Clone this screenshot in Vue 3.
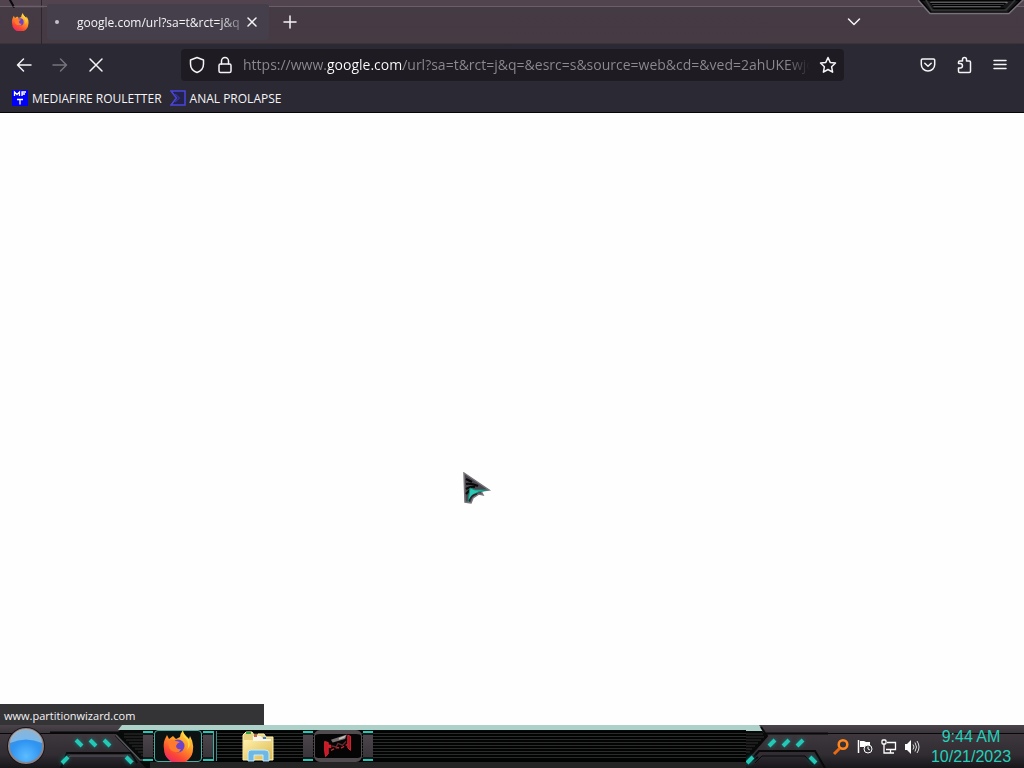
<script setup>
import { ref } from 'vue'

const address = ref('https://www.google.com/url?sa=t&rct=j&q=&esrc=s&source=web&cd=&ved=2ahUKEwjo2878')
</script>

<template>
  <div class="desktop">
    <header class="tabstrip">
      <svg class="scratch" width="44" height="9" viewBox="0 0 44 9" aria-hidden="true">
        <path d="M10 0l4 7" stroke="#08070a" stroke-width="2" />
        <path d="M14 6.500h30" stroke="#6b5f6b" />
      </svg>
      <button class="pinned" aria-label="Firefox View">
        <svg width="18" height="18" viewBox="0 0 32 32"><use href="#fox" /></svg>
      </button>
      <div class="tab">
        <span class="loading"></span>
        <span class="tab-title">google.com/url?sa=t&amp;rct=j&amp;q</span>
        <button class="tab-close" aria-label="Close tab">
          <svg width="12" height="12" viewBox="0 0 12 12"><path d="M2 2l8 8M10 2l-8 8" /></svg>
        </button>
      </div>
      <button class="new-tab" aria-label="New tab">
        <svg width="14" height="14" viewBox="0 0 14 14"><path d="M7 1v12M1 7h12" /></svg>
      </button>
      <button class="all-tabs" aria-label="List all tabs">
        <svg width="14" height="10" viewBox="0 0 14 10"><path d="M1.500 2L7 7.500 12.500 2" /></svg>
      </button>
      <svg class="notch" width="106" height="15" viewBox="0 0 106 15" aria-hidden="true">
        <path d="M2 0l11 13h77L103 0z" fill="#19191b" stroke="#050506" stroke-width="2" />
        <path d="M0 0l12 13.500h79L105 0" fill="none" stroke="#77737a" />
        <path d="M8 0l6 10h74l9-10" fill="none" stroke="#38383b" />
        <path d="M13 2.500h76M15 4.500h70M16 6.500h66" stroke="#77777a" />
        <path d="M13 3.500h74M15 5.500h70M16 8.500h70" stroke="#000" />
      </svg>
    </header>

    <nav class="toolbar">
      <div class="nav-buttons">
        <button aria-label="Back">
          <svg width="16" height="16" viewBox="0 0 16 16"><path d="M15 8H1.500M7.500 2l-6 6 6 6" /></svg>
        </button>
        <button class="dim" aria-label="Forward" disabled>
          <svg width="16" height="16" viewBox="0 0 16 16"><path d="M1 8h13.500M8.500 2l6 6-6 6" /></svg>
        </button>
        <button aria-label="Stop">
          <svg width="16" height="16" viewBox="0 0 16 16"><path d="M2 2l12 12M14 2L2 14" /></svg>
        </button>
      </div>
      <div class="urlbar">
        <button aria-label="Tracking protection">
          <svg width="16" height="18" viewBox="0 0 16 18"><path d="M8 1.500l6.500 2.500v4c0 4-2.500 7-6.500 8.500C4 15 1.500 12 1.500 8V4z" /></svg>
        </button>
        <button aria-label="Site information">
          <svg width="16" height="18" viewBox="0 0 16 18"><rect x="2" y="8" width="12" height="8.500" rx="1.500" /><path d="M4.500 8V5a3.500 3.500 0 0 1 7 0v3" /></svg>
        </button>
        <input v-model="address" class="address" type="text" aria-label="Address" spellcheck="false" />
        <button aria-label="Bookmark this page">
          <svg width="18" height="18" viewBox="0 0 18 18"><path d="M9 1.500l2.200 4.900 5.300.6-3.900 3.700 1 5.500L9 13.500l-4.600 2.700 1-5.500L1.500 7l5.300-.6z" /></svg>
        </button>
      </div>
      <div class="tools">
        <button aria-label="Save to Pocket">
          <svg width="16" height="16" viewBox="0 0 16 16"><path d="M2.500 2h11a1.200 1.200 0 0 1 1.200 1.200V7.500a6.700 6.500 0 0 1-13.400 0V3.200A1.200 1.200 0 0 1 2.500 2zM4.800 6.200L8 9.200l3.200-3" /></svg>
        </button>
        <button aria-label="Extensions">
          <svg width="16" height="18" viewBox="0 0 16 18"><path d="M2.500 7.500V6.200Q2.500 5 3.700 5H6.500V3.500a2 2 0 0 1 4 0V5h2.800q1.200 0 1.200 1.200v9.100q0 1.200-1.200 1.200H3.700q-1.200 0-1.200-1.200V12h1.700a2.200 2.200 0 0 0 0-4.500z" /></svg>
        </button>
        <button aria-label="Open menu">
          <svg width="14" height="14" viewBox="0 0 14 14"><path d="M1 2.500h12M1 6.500h12M1 10.500h12" /></svg>
        </button>
      </div>
    </nav>

    <div class="bookmarks">
      <a href="#">
        <svg width="16" height="16" viewBox="0 0 16 16">
          <rect width="16" height="16" fill="#0000f4" />
          <path d="M2.500 6V2l2.500 2.500L7.500 2v4M10 6V2h4M10 4h3M5 9.500h6M8 9.500v5" fill="none" stroke="#fff" stroke-width="1.300" />
        </svg>
        <span>MEDIAFIRE ROULETTER</span>
      </a>
      <a href="#">
        <svg width="16" height="16" viewBox="0 0 16 16">
          <path d="M1 1h14v14H1l5.500-7z" fill="#23224a" stroke="#4b46db" stroke-width="1.500" />
          <path d="M5 4l4.500 4L5 12" fill="none" stroke="#37349c" stroke-width="1.200" />
        </svg>
        <span>ANAL PROLAPSE</span>
      </a>
    </div>

    <main class="page">
      <svg class="cursor" width="30" height="34" viewBox="0 0 30 34" aria-hidden="true">
        <path d="M2 1l25 17-8 1 2 4-4-1-6 4-2 5-6-1z" fill="#4b454d" stroke="#77747a" stroke-width="1.500" />
        <path d="M4 7l6 3M4 12q5-1 12 2M4 17q5-3 9-2M4 22l4-4" fill="none" stroke="#08090a" stroke-width="2.200" />
        <path d="M8 16l5 2 12 0-9 2-6 4-4 6 1-7z" fill="#2bc9b5" stroke="#149080" />
        <path d="M7 29q3-7 8-7" fill="none" stroke="#28262b" stroke-width="1.500" />
      </svg>
      <div class="status">www.partitionwizard.com</div>
    </main>

    <footer class="taskbar">
      <button class="start" aria-label="Start">
        <svg width="42" height="42" viewBox="0 0 42 42">
          <circle cx="21" cy="20" r="19" fill="#171519" />
          <circle cx="21" cy="20" r="17" fill="url(#orb)" stroke="#8c8489" stroke-width="2" />
          <path d="M5 17a16 14 0 0 1 32 0q-16-7-32 0z" fill="#d3e5ee" opacity=".45" />
        </svg>
      </button>
      <svg class="deco-left" width="100" height="43" viewBox="0 0 100 43" aria-hidden="true">
        <path d="M0 7.500h69M11 43l6-15h64l6 10" fill="none" stroke="#09090a" stroke-width="2" />
        <path d="M13 40l7-9h58l6 6" fill="none" stroke="#5a555d" />
        <path d="M74 0h26v43H96L65 11z" fill="#080909" />
        <path d="M72 0h28v5H68z" fill="#add0c9" />
        <path d="M66 10l24 25h10" fill="none" stroke="#55585a" stroke-width="1.500" />
        <path d="M74 9h26M74 12h26M76 15h24M79 18h21M82 21h18M85 24h15M88 27h12M91 30h9" stroke="#303132" />
        <g class="lamp"><path d="M26 15l6 6M40 15l6 6M54 15l6 6M12 38l6-6M76 32l6 6" /></g>
      </svg>
      <div class="tasks">
        <button class="task active" aria-label="Firefox">
          <svg width="34" height="32" viewBox="0 0 32 32"><use href="#fox" /></svg>
        </button>
        <button class="task" aria-label="File Explorer">
          <svg width="34" height="32" viewBox="0 0 34 32">
            <path d="M2 5l3-3h6l2 3h4V4h6l2 3h7v23H2z" fill="#e8d27f" stroke="#fff1ac" />
            <path d="M3 10h28v19H3z" fill="url(#folder)" />
            <path d="M5 3h5" stroke="#329b48" stroke-width="2" />
            <path d="M12 6h8l2 3h8v2H12z" fill="#f7f5ed" />
            <path d="M13 6h3" stroke="#d75b3e" stroke-width="2" /><path d="M22 8h3" stroke="#3b7fce" stroke-width="2" />
            <path d="M7 31V23q0-3 3-3h14q4 0 4 3v8h-6v-6H13v6z" fill="#6fb8e4" stroke="#c5edff" />
          </svg>
        </button>
        <button class="task framed" aria-label="Red frame application">
          <svg width="32" height="28" viewBox="0 0 36 28">
            <path d="M3 9l4 1v3h3v3l-3-1v8l-3 3-1-6z" fill="#c71927" stroke="#e42b38" />
            <path d="M29 2l3 1v16l-3-3z" fill="#a91620" stroke="#e42b38" />
            <path d="M10 7l18-6-2 5-14 4z" fill="#777174" /><path d="M19 5l8-3-2 3-6 2z" fill="#c6bfb9" />
            <path d="M10 19l6-3 6 0 7-4" fill="none" stroke="#c02630" stroke-width="1.500" stroke-dasharray="4 2" />
            <path d="M11 14l5 1 2-4 5 2 4-4" fill="none" stroke="#5f2a30" stroke-width="1.500" />
          </svg>
        </button>
      </div>
      <svg class="deco-right" width="82" height="43" viewBox="0 0 82 43" aria-hidden="true">
        <path d="M0 0h13l4 6H0z" fill="#add0c9" />
        <path d="M0 6h16l5 6L0 35z" fill="#080909" />
        <path d="M0 9h17M0 12h18M0 15h15M0 18h12M0 21h9M0 24h6M0 27h4" stroke="#303132" />
        <path d="M15 2l6 9L0 35M18 8.500h64M6 34l7-8h56l10 17M6 36l6-4" fill="none" stroke="#09090a" stroke-width="2" />
        <path d="M9 38l7-7h43l8 9" fill="none" stroke="#09090a" />
        <g class="lamp"><path d="M23 21l6-6M37 21l6-6M51 21l6-6M1 38l6-6M64 32l6 6" /></g>
      </svg>
      <div class="tray">
        <button aria-label="Search tool">
          <svg width="18" height="18" viewBox="0 0 18 18"><circle cx="11" cy="6.500" r="4.300" fill="none" stroke="#ff861d" stroke-width="2.500" /><path d="M7.500 10.500L2 16" stroke="#e96911" stroke-width="3" /></svg>
        </button>
        <button aria-label="Action center">
          <svg width="18" height="18" viewBox="0 0 18 18"><path d="M2.500 2v13" stroke="#fff" stroke-width="1.500" /><path d="M4 3h4l2 1h4v5H4z" fill="#fff" /><circle cx="12" cy="11" r="4" fill="#353238" stroke="#fff" /><path d="M12 8.500V11l2 1" fill="none" stroke="#fff" /></svg>
        </button>
        <button aria-label="Network">
          <svg width="18" height="18" viewBox="0 0 18 18" fill="none" stroke="#fff" stroke-width="1.300"><path d="M7 4.500h8.500v7H6M10.500 12v3M7 15h7M4 6v9h3" /><rect x="2" y="2" width="4" height="4" rx="1" /></svg>
        </button>
        <button aria-label="Volume">
          <svg width="18" height="18" viewBox="0 0 18 18"><path d="M1 6h2l4-4v14l-4-4H1z" fill="#fff" /><path d="M9 6.500q2 2.500 0 5M11 4.500q3 4.500 0 9M13 3q4 6 0 12" fill="none" stroke="#ddd" /></svg>
        </button>
      </div>
      <div class="clock"><time>9:44 AM</time><time>10/21/2023</time></div>
    </footer>

    <svg class="defs" width="0" height="0" aria-hidden="true">
      <defs>
        <radialGradient id="orb" cx=".5" cy=".8" r=".75"><stop stop-color="#5cbcff" /><stop offset=".6" stop-color="#2f94f2" /><stop offset="1" stop-color="#4a8fc8" /></radialGradient>
        <linearGradient id="folder" x2="1" y2="1"><stop stop-color="#fff0a9" /><stop offset="1" stop-color="#dcb951" /></linearGradient>
        <linearGradient id="flame" x1=".8" y1="0" x2=".25" y2="1"><stop stop-color="#ffe44b" /><stop offset=".4" stop-color="#ff9a28" /><stop offset=".75" stop-color="#fb4735" /><stop offset="1" stop-color="#ea236f" /></linearGradient>
        <symbol id="fox" viewBox="0 0 32 32">
          <path d="M3 9l2-4 2 4 4-3 3 3q2-1 4-2 0-3 3-7 0 4 6 9l1-3q4 7 3 13a14.500 14.500 0 0 1-29 0Q1 13 3 9z" fill="url(#flame)" />
          <circle cx="16" cy="16" r="6.500" fill="#6a45c9" />
          <path d="M6 11q4-2 8 0l4 1q-3 1-4 4 1 4 5 3l-2 3q-8 1-10-5z" fill="#ff7a2c" />
          <path d="M20 1q0 5 4 8 4 5 1 11 5-5 1-12-4-3-6-7z" fill="#ffda42" />
        </symbol>
      </defs>
    </svg>
  </div>
</template>

<style scoped>
.desktop { display: flex; flex-direction: column; min-height: 100vh; background: #fefefe; color: #f5f4f7; font-family: "Open Sans", "Noto Sans", sans-serif; font-size: 12px; }
button { display: flex; align-items: center; justify-content: center; flex: none; margin: 0; padding: 0; border: 0; background: none; color: inherit; }
.tabstrip svg, .toolbar svg { fill: none; stroke: currentColor; stroke-width: 1.5; stroke-linecap: round; stroke-linejoin: round; }
.pinned svg { stroke: none !important; }
.tabstrip { position: relative; display: flex; height: 44px; background: linear-gradient(#51444f 0, #51444f 6px, #6b5f6a 6px, #6b5f6a 7px, #453b45 7px, #463a43 43px, #3b333b 43px); }
.tabstrip .scratch { position: absolute; left: 0; top: 0; stroke: none; }
.tabstrip .notch { position: absolute; right: 0; top: 0; stroke: none; }
.pinned { width: 42px; border-right: 1px solid #2c272e; padding-right: 2px; }
.tab { display: flex; align-items: center; width: 222px; height: 36px; margin: 4px 0 0 5px; background: #443f4b; border-radius: 3px; }
.loading { width: 4px; height: 4px; margin: 0 18px 0 8px; border-radius: 50%; background: #c6c2cd; }
.tab-title { flex: 1; min-width: 0; overflow: hidden; white-space: nowrap; mask-image: linear-gradient(90deg, #000 84%, rgb(0 0 0 / 20%)); }
.tab-close { width: 16px; height: 24px; margin-right: 9px; }
.new-tab { width: 42px; }
.all-tabs { width: 40px; margin-left: auto; margin-right: 150px; }
.toolbar { display: flex; align-items: center; height: 42px; background: #2b2933; }
.nav-buttons { display: flex; width: 181px; gap: 4px; padding-left: 8px; box-sizing: border-box; }
.nav-buttons button { width: 32px; height: 32px; }
.dim { color: #77737d; }
.urlbar { display: flex; align-items: center; flex: 1; min-width: 0; height: 32px; padding: 0 2px; border-radius: 4px; background: #1e1c22; }
.urlbar button { width: 28px; height: 28px; }
.address { flex: 1; min-width: 0; height: 28px; padding: 0; border: 0; margin: 0 4px; outline: 0; font: 14px/28px "Open Sans", "Noto Sans", sans-serif; background: linear-gradient(90deg, #8d8a92 0 84px, #fff 84px 160px, #8d8a92 160px calc(100% - 24px), transparent); background-clip: text; -webkit-text-fill-color: transparent; }
.tools { display: flex; gap: 4px; padding: 0 8px 0 68px; }
.tools button { width: 32px; height: 32px; }
.bookmarks { display: flex; align-items: center; gap: 8px; height: 24px; padding: 0 12px 2px; border-bottom: 1px solid #050507; background: #2b2933; }
.bookmarks a { display: flex; align-items: center; gap: 4px; color: inherit; text-decoration: none; white-space: nowrap; }
.page { position: relative; display: flex; flex: 1; align-items: flex-end; }
.cursor { position: absolute; left: 462px; top: 359px; }
.status { width: 260px; height: 21px; padding-left: 4px; background: #343336; font-size: 11px; line-height: 23px; }
.taskbar { display: flex; height: 43px; background: linear-gradient(#4b454b 0, #39343a 8px, #080809 8px, #080809 9px, #3e383e 9px, #302c32 30px, #171619 43px); overflow: hidden; }
.start { width: 48px; margin-left: 2px; }
.deco-left, .deco-right { flex: none; }
.lamp { fill: none; stroke: #24c8b6; stroke-width: 4; filter: drop-shadow(0 0 2px #0e8078); }
.tasks { display: flex; flex: 1; min-width: 0; gap: 32px; padding-left: 4px; background: linear-gradient(#add0c9 0 5px, #080909 5px 6px, transparent 6px), linear-gradient(transparent 34px, #020303 34px 37px, #252526 37px), repeating-linear-gradient(#020303 0 2px, #2b2b2c 2px 3px); }
.task { position: relative; width: 48px; height: 32px; margin-top: 5px; }
.active { background: #0c1112; border: 1px solid #4eaaa0; border-radius: 4px; }
.framed { background: #050506; border: solid #4f4b4e; border-width: 4px 1px; border-radius: 6px; }
.active::before, .active::after, .framed::before, .framed::after { content: ""; position: absolute; top: 0; width: 10px; height: 30px; background: linear-gradient(#24c8b6 0 2px, #161517 2px 4px, #4c464c 4px, #39343a 26px, #161517 26px 28px, #24c8b6 28px); }
.framed::before, .framed::after { top: -3px; }
.active::before, .framed::before { right: calc(100% + 2px); }
.active::after, .framed::after { left: calc(100% + 2px); }
.active::after { border-right: 1px solid #4eaaa0; box-shadow: 2px 0 #0c1112, 3px 0 #3b8d86; }
.tray { display: flex; gap: 6px; padding: 0 8px 0 4px; align-items: center; }
.tray button { width: 18px; height: 24px; }
.clock { display: flex; flex-direction: column; align-items: center; width: 82px; padding: 2px 12px 0 0; color: #25d0ba; font: 16px/20px "Liberation Sans", Arial, sans-serif; }
.defs { position: absolute; }
</style>

<style>
body { margin: 0; }
</style>
